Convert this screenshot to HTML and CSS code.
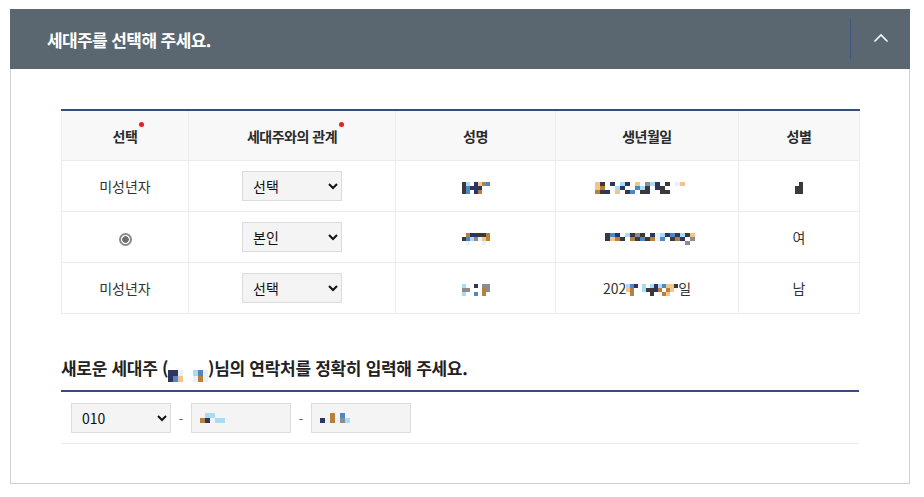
FILE: index.html
```html
<!DOCTYPE html>
<html lang="ko">
<head>
    <meta charset="UTF-8">
    <meta name="viewport" content="width=device-width, initial-scale=1.0">
    <title>세대주 선택</title>
    <link rel="stylesheet" href="styles.css">
</head>
<body>
    <div class="panel">
        <div class="panel-head">
            <h2 class="panel-title">세대주를 선택해 주세요.</h2>
            <button class="toggle" type="button">
                <svg width="16" height="10" viewBox="0 0 16 10"><polyline points="1.5,8.5 8,2 14.5,8.5" fill="none" stroke="#fff" stroke-width="1.6"/></svg>
            </button>
        </div>
        <div class="panel-body">
            <table class="member-table">
                <colgroup>
                    <col class="c1"><col class="c2"><col class="c3"><col class="c4"><col class="c5">
                </colgroup>
                <thead>
                    <tr>
                        <th><span class="req">선택</span></th>
                        <th><span class="req">세대주와의 관계</span></th>
                        <th>성명</th>
                        <th>생년월일</th>
                        <th>성별</th>
                    </tr>
                </thead>
                <tbody>
                    <tr>
                        <td>미성년자</td>
                        <td><select class="sel"><option>선택</option><option>본인</option></select></td>
                        <td><span class="mosaic w7"><i class="a"></i><i class="b"></i><i class="x"></i><i class="d"></i><i class="h"></i><i class="c"></i><i class="e"></i><i class="a"></i><i class="e"></i><i class="d"></i><i class="d"></i><i class="d"></i><i class="x"></i><i class="x"></i><i class="a"></i><i class="e"></i><i class="x"></i><i class="d"></i><i class="c"></i><i class="x"></i><i class="x"></i></span></td>
                        <td><span class="mosaic w21"><i class="h"></i><i class="a"></i><i class="x"></i><i class="d"></i><i class="x"></i><i class="b"></i><i class="d"></i><i class="x"></i><i class="h"></i><i class="x"></i><i class="g"></i><i class="b"></i><i class="d"></i><i class="x"></i><i class="a"></i><i class="x"></i><i class="f"></i><i class="h"></i><i class="x"></i><i class="x"></i><i class="x"></i><i class="h"></i><i class="c"></i><i class="x"></i><i class="x"></i><i class="b"></i><i class="d"></i><i class="x"></i><i class="x"></i><i class="e"></i><i class="b"></i><i class="a"></i><i class="x"></i><i class="d"></i><i class="a"></i><i class="x"></i><i class="x"></i><i class="x"></i><i class="x"></i><i class="x"></i><i class="x"></i><i class="x"></i><i class="c"></i><i class="a"></i><i class="d"></i><i class="x"></i><i class="h"></i><i class="x"></i><i class="a"></i><i class="e"></i><i class="x"></i><i class="a"></i><i class="d"></i><i class="x"></i><i class="x"></i><i class="a"></i><i class="a"></i><i class="x"></i><i class="x"></i><i class="x"></i><i class="x"></i><i class="x"></i><i class="x"></i></span></td>
                        <td><span class="mosaic w2"><i class="x"></i><i class="a"></i><i class="a"></i><i class="a"></i><i class="a"></i><i class="a"></i></span></td>
                    </tr>
                    <tr>
                        <td><span class="radio"></span></td>
                        <td><select class="sel"><option>본인</option><option>선택</option></select></td>
                        <td><span class="mosaic w7"><i class="x"></i><i class="c"></i><i class="d"></i><i class="d"></i><i class="a"></i><i class="a"></i><i class="c"></i><i class="a"></i><i class="e"></i><i class="b"></i><i class="g"></i><i class="f"></i><i class="h"></i><i class="c"></i><i class="x"></i><i class="f"></i><i class="x"></i><i class="x"></i><i class="x"></i><i class="f"></i><i class="x"></i></span></td>
                        <td><span class="mosaic w21"><i class="x"></i><i class="x"></i><i class="a"></i><i class="e"></i><i class="d"></i><i class="x"></i><i class="b"></i><i class="d"></i><i class="g"></i><i class="a"></i><i class="x"></i><i class="d"></i><i class="f"></i><i class="b"></i><i class="d"></i><i class="e"></i><i class="d"></i><i class="b"></i><i class="a"></i><i class="h"></i><i class="x"></i><i class="x"></i><i class="x"></i><i class="d"></i><i class="h"></i><i class="c"></i><i class="a"></i><i class="x"></i><i class="c"></i><i class="a"></i><i class="e"></i><i class="a"></i><i class="c"></i><i class="f"></i><i class="e"></i><i class="x"></i><i class="a"></i><i class="c"></i><i class="d"></i><i class="x"></i><i class="g"></i><i class="x"></i><i class="x"></i><i class="x"></i><i class="x"></i><i class="x"></i><i class="x"></i><i class="x"></i><i class="x"></i><i class="x"></i><i class="x"></i><i class="x"></i><i class="x"></i><i class="x"></i><i class="x"></i><i class="x"></i><i class="x"></i><i class="x"></i><i class="x"></i><i class="x"></i><i class="g"></i><i class="x"></i><i class="x"></i></span></td>
                        <td>여</td>
                    </tr>
                    <tr>
                        <td>미성년자</td>
                        <td><select class="sel"><option>선택</option><option>본인</option></select></td>
                        <td><span class="mosaic w7"><i class="b"></i><i class="x"></i><i class="x"></i><i class="d"></i><i class="x"></i><i class="g"></i><i class="g"></i><i class="g"></i><i class="g"></i><i class="x"></i><i class="x"></i><i class="x"></i><i class="c"></i><i class="g"></i><i class="b"></i><i class="x"></i><i class="x"></i><i class="e"></i><i class="x"></i><i class="c"></i><i class="x"></i></span></td>
                        <td>202<span class="mosaic w13"><i class="b"></i><i class="e"></i><i class="d"></i><i class="x"></i><i class="b"></i><i class="x"></i><i class="b"></i><i class="d"></i><i class="b"></i><i class="e"></i><i class="h"></i><i class="h"></i><i class="a"></i><i class="h"></i><i class="c"></i><i class="x"></i><i class="x"></i><i class="b"></i><i class="a"></i><i class="a"></i><i class="d"></i><i class="c"></i><i class="x"></i><i class="c"></i><i class="h"></i><i class="x"></i><i class="x"></i><i class="c"></i><i class="x"></i><i class="x"></i><i class="x"></i><i class="x"></i><i class="a"></i><i class="x"></i><i class="x"></i><i class="c"></i><i class="h"></i><i class="x"></i><i class="x"></i></span>일</td>
                        <td>남</td>
                    </tr>
                </tbody>
            </table>

            <h3 class="section-title">새로운 세대주 (<span class="mosaic w8 inline"><i class="d"></i><i class="d"></i><i class="f"></i><i class="x"></i><i class="x"></i><i class="b"></i><i class="e"></i><i class="f"></i><i class="d"></i><i class="e"></i><i class="h"></i><i class="x"></i><i class="x"></i><i class="f"></i><i class="c"></i><i class="f"></i></span>)님의 연락처를 정확히 입력해 주세요.</h3>

            <div class="phone-row">
                <select class="sel"><option>010</option><option>011</option></select>
                <span class="dash">-</span>
                <div class="field"><span class="mosaic w6"><i class="x"></i><i class="b"></i><i class="b"></i><i class="x"></i><i class="x"></i><i class="x"></i><i class="c"></i><i class="d"></i><i class="x"></i><i class="b"></i><i class="b"></i><i class="x"></i></span></div>
                <span class="dash">-</span>
                <div class="field"><span class="mosaic w6"><i class="x"></i><i class="x"></i><i class="c"></i><i class="x"></i><i class="e"></i><i class="x"></i><i class="d"></i><i class="f"></i><i class="c"></i><i class="f"></i><i class="g"></i><i class="b"></i></span></div>
            </div>
        </div>
    </div>
</body>
</html>
```

FILE: styles.css
```css
body, html {
    margin: 0;
    padding: 0;
    background: #fff;
    font-family: 'Noto Sans CJK KR', 'Noto Sans', sans-serif;
    color: #333;
}
.panel {
    width: 900px;
    margin: 9px 0 0 10px;
}
.panel-head {
    display: flex;
    align-items: center;
    height: 60px;
    background-color: #5a6770;
    padding-left: 37px;
}
.panel-title {
    flex: 1;
    margin: 0;
    font-size: 17px;
    font-weight: bold;
    color: #fff;
    letter-spacing: -0.6px;
}
.toggle {
    width: 60px;
    height: 40px;
    border: none;
    border-left: 1px solid #3d5585;
    background: transparent;
    display: flex;
    align-items: center;
    justify-content: center;
    padding: 0 0 2px;
    cursor: pointer;
}
.panel-body {
    border: 1px solid #cfcfcf;
    border-top: none;
    padding: 40px 50px 40px 50px;
    height: 334px;
}
.member-table {
    width: 798px;
    border-collapse: collapse;
    table-layout: fixed;
    border-top: 2px solid #354d7c;
    font-size: 14px;
}
.c1 { width: 127px; }
.c2 { width: 207px; }
.c3 { width: 160px; }
.c4 { width: 183px; }
.c5 { width: 121px; }
.member-table th {
    height: 49px;
    background-color: #f8f8f8;
    font-weight: bold;
    color: #2a2a2a;
    border-left: 1px solid #ececec;
    border-right: 1px solid #ececec;
    padding: 0;
    letter-spacing: -0.5px;
}
.member-table td {
    height: 50px;
    text-align: center;
    border: 1px solid #ececec;
    padding: 0;
}
.req {
    position: relative;
}
.req::after {
    content: '';
    position: absolute;
    top: -4px;
    right: -7px;
    width: 5px;
    height: 5px;
    border-radius: 50%;
    background-color: #ee1c1c;
}
.sel {
    width: 100px;
    height: 30px;
    border: 1px solid #dcdcdc;
    background-color: #f4f4f4;
    font-family: 'Noto Sans CJK KR', 'Noto Sans', sans-serif;
    font-size: 14px;
    color: #111;
    padding: 0 6px;
    border-radius: 0;
    vertical-align: middle;
}
.radio {
    display: inline-block;
    width: 9px;
    height: 9px;
    border: 2px solid #8a8a8a;
    border-radius: 50%;
    background: radial-gradient(circle, #6e6e6e 0, #6e6e6e 3px, #fff 3.5px);
    vertical-align: middle;
}
.mosaic {
    display: inline-grid;
    grid-auto-rows: 4px;
    vertical-align: middle;
}
.mosaic.w2 { grid-template-columns: repeat(2, 4px); }
.mosaic.w6 { grid-template-columns: repeat(6, 5px); grid-auto-rows: 5px; }
.mosaic.w7 { grid-template-columns: repeat(7, 4px); }
.mosaic.w8 { grid-template-columns: repeat(8, 5px); grid-auto-rows: 6px; }
.mosaic.w13 { grid-template-columns: repeat(13, 4px); }
.mosaic.w21 { grid-template-columns: repeat(21, 5px); }
.mosaic.inline {
    vertical-align: -1px;
}
.mosaic i { display: block; }
.mosaic .a { background: #3a3a3a; }
.mosaic .b { background: #a8dcf5; }
.mosaic .c { background: #b8803e; }
.mosaic .d { background: #2e3660; }
.mosaic .e { background: #4f86c6; }
.mosaic .f { background: #e9f1f8; }
.mosaic .g { background: #8c8c8c; }
.mosaic .h { background: #f2c58a; }
.mosaic .x { background: transparent; }
.section-title {
    margin: 41px 0 0;
    font-size: 17px;
    font-weight: bold;
    color: #222;
    letter-spacing: -0.3px;
    padding-bottom: 10px;
    border-bottom: 2px solid #354d7c;
    line-height: 25px;
    height: 25px;
}
.phone-row {
    display: flex;
    align-items: center;
    gap: 7px;
    padding: 11px 10px 10px;
    border-bottom: 1px solid #ececec;
}
.dash {
    color: #555;
    font-size: 13px;
    width: 6px;
    text-align: center;
}
.field {
    border: 1px solid #dcdcdc;
    background-color: #f4f4f4;
    display: flex;
    align-items: center;
    padding-left: 8px;
    box-sizing: border-box;
    width: 100px;
    height: 30px;
}
```
